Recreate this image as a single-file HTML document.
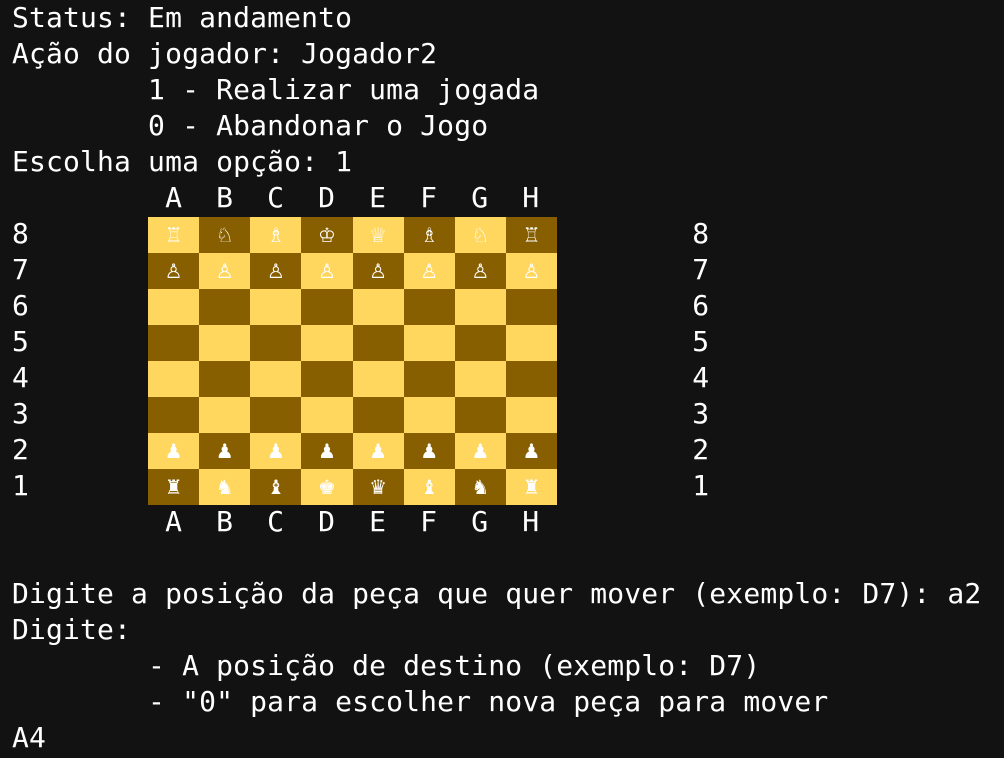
<!DOCTYPE html>
<html><head><style>
body{margin:0;background:#121212;width:1004px;height:758px;overflow:hidden}
pre{margin:0;padding-left:12px;font-family:"DejaVu Sans Mono","Liberation Mono",monospace;font-size:28px;letter-spacing:0.15px;line-height:36px;color:#fff;white-space:pre}
#b{position:absolute;left:148px;top:217px;width:409px;height:288px;display:grid;grid-template-columns:repeat(8,1fr);grid-template-rows:repeat(8,36px)}
#b div{display:flex;align-items:center;justify-content:center;color:#fff;font-family:"DejaVu Sans",sans-serif;font-size:20px}
.l{background:#ffd75f}.d{background:#875f00}
</style></head><body>
<pre>Status: Em andamento
Ação do jogador: Jogador2
        1 - Realizar uma jogada
        0 - Abandonar o Jogo
Escolha uma opção: 1
         A  B  C  D  E  F  G  H
8                                       8
7                                       7
6                                       6
5                                       5
4                                       4
3                                       3
2                                       2
1                                       1
         A  B  C  D  E  F  G  H

Digite a posição da peça que quer mover (exemplo: D7): a2
Digite:
        - A posição de destino (exemplo: D7)
        - "0" para escolher nova peça para mover
A4</pre>
<div id="b">
<div class="l">♖</div><div class="d">♘</div><div class="l">♗</div><div class="d">♔</div><div class="l">♕</div><div class="d">♗</div><div class="l">♘</div><div class="d">♖</div>
<div class="d">♙</div><div class="l">♙</div><div class="d">♙</div><div class="l">♙</div><div class="d">♙</div><div class="l">♙</div><div class="d">♙</div><div class="l">♙</div>
<div class="l"></div><div class="d"></div><div class="l"></div><div class="d"></div><div class="l"></div><div class="d"></div><div class="l"></div><div class="d"></div>
<div class="d"></div><div class="l"></div><div class="d"></div><div class="l"></div><div class="d"></div><div class="l"></div><div class="d"></div><div class="l"></div>
<div class="l"></div><div class="d"></div><div class="l"></div><div class="d"></div><div class="l"></div><div class="d"></div><div class="l"></div><div class="d"></div>
<div class="d"></div><div class="l"></div><div class="d"></div><div class="l"></div><div class="d"></div><div class="l"></div><div class="d"></div><div class="l"></div>
<div class="l">♟</div><div class="d">♟</div><div class="l">♟</div><div class="d">♟</div><div class="l">♟</div><div class="d">♟</div><div class="l">♟</div><div class="d">♟</div>
<div class="d">♜</div><div class="l">♞</div><div class="d">♝</div><div class="l">♚</div><div class="d">♛</div><div class="l">♝</div><div class="d">♞</div><div class="l">♜</div>
</div>
</body></html>
